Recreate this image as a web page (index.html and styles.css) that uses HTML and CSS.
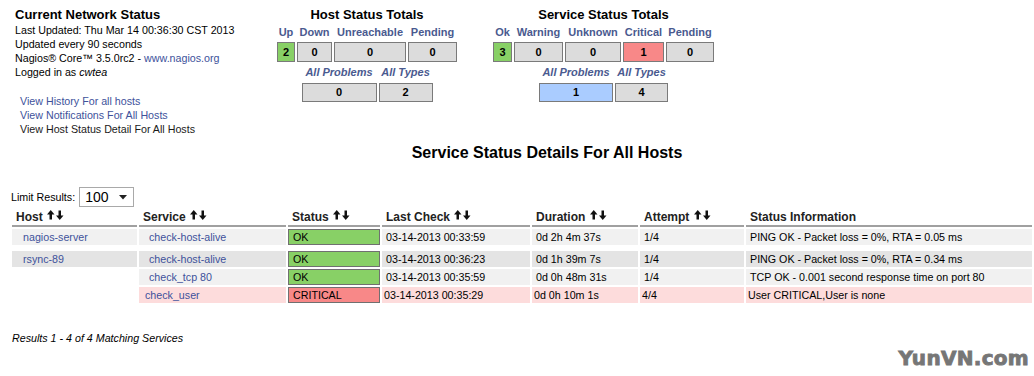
FILE: index.html
```html
<!DOCTYPE html>
<html lang="en">
<head>
    <meta charset="UTF-8">
    <title>Current Network Status</title>
    <link rel="stylesheet" href="styles.css">
</head>
<body>
    <div class="top">
        <div class="info">
            <div class="info-title">Current Network Status</div>
            <div class="info-line">Last Updated: Thu Mar 14 00:36:30 CST 2013</div>
            <div class="info-line">Updated every 90 seconds</div>
            <div class="info-line">Nagios&reg; Core&trade; 3.5.0rc2 - <a href="#">www.nagios.org</a></div>
            <div class="info-line">Logged in as <i>cwtea</i></div>
            <div class="links">
                <a href="#">View History For all hosts</a>
                <a href="#">View Notifications For All Hosts</a>
                <a href="#" class="dark">View Host Status Detail For All Hosts</a>
            </div>
        </div>
        <div class="totals host-totals">
            <div class="totals-title">Host Status Totals</div>
            <div class="totals-grid">
                <span class="lbl">Up</span>
                <span class="lbl">Down</span>
                <span class="lbl">Unreachable</span>
                <span class="lbl">Pending</span>
                <span class="box green">2</span>
                <span class="box">0</span>
                <span class="box">0</span>
                <span class="box">0</span>
            </div>
            <div class="totals-grid sub">
                <span class="lbl">All Problems</span>
                <span class="lbl">All Types</span>
                <span class="box">0</span>
                <span class="box">2</span>
            </div>
        </div>
        <div class="totals service-totals">
            <div class="totals-title">Service Status Totals</div>
            <div class="totals-grid">
                <span class="lbl">Ok</span>
                <span class="lbl">Warning</span>
                <span class="lbl">Unknown</span>
                <span class="lbl">Critical</span>
                <span class="lbl">Pending</span>
                <span class="box green">3</span>
                <span class="box">0</span>
                <span class="box">0</span>
                <span class="box red">1</span>
                <span class="box">0</span>
            </div>
            <div class="totals-grid sub">
                <span class="lbl">All Problems</span>
                <span class="lbl">All Types</span>
                <span class="box blue">1</span>
                <span class="box">4</span>
            </div>
        </div>
    </div>

    <div class="status-title">Service Status Details For All Hosts</div>

    <div class="limit">
        Limit Results:
        <span class="select-wrap">
            <select>
                <option>100</option>
            </select>
            <svg class="select-arrow" width="8" height="5" viewBox="0 0 8 5"><polygon points="0,0 8,0 4,4.5" fill="#222"/></svg>
        </span>
    </div>

    <table class="status">
        <colgroup>
            <col style="width:125px">
            <col style="width:147px">
            <col style="width:92px">
            <col style="width:148px">
            <col style="width:106px">
            <col style="width:104px">
            <col style="width:286px">
        </colgroup>
        <thead>
            <tr>
                <th>Host <svg class="sort" width="17" height="10" viewBox="0 0 17 10"><polygon points="0,4.5 3.75,0 7.5,4.5"/><rect x="2.5" y="4" width="2.5" height="5.5"/><rect x="11.5" y="0.5" width="2.5" height="5.5"/><polygon points="9,5.5 16.5,5.5 12.75,10"/></svg></th>
                <th>Service <svg class="sort" width="17" height="10" viewBox="0 0 17 10"><polygon points="0,4.5 3.75,0 7.5,4.5"/><rect x="2.5" y="4" width="2.5" height="5.5"/><rect x="11.5" y="0.5" width="2.5" height="5.5"/><polygon points="9,5.5 16.5,5.5 12.75,10"/></svg></th>
                <th>Status <svg class="sort" width="17" height="10" viewBox="0 0 17 10"><polygon points="0,4.5 3.75,0 7.5,4.5"/><rect x="2.5" y="4" width="2.5" height="5.5"/><rect x="11.5" y="0.5" width="2.5" height="5.5"/><polygon points="9,5.5 16.5,5.5 12.75,10"/></svg></th>
                <th>Last Check <svg class="sort" width="17" height="10" viewBox="0 0 17 10"><polygon points="0,4.5 3.75,0 7.5,4.5"/><rect x="2.5" y="4" width="2.5" height="5.5"/><rect x="11.5" y="0.5" width="2.5" height="5.5"/><polygon points="9,5.5 16.5,5.5 12.75,10"/></svg></th>
                <th>Duration <svg class="sort" width="17" height="10" viewBox="0 0 17 10"><polygon points="0,4.5 3.75,0 7.5,4.5"/><rect x="2.5" y="4" width="2.5" height="5.5"/><rect x="11.5" y="0.5" width="2.5" height="5.5"/><polygon points="9,5.5 16.5,5.5 12.75,10"/></svg></th>
                <th>Attempt <svg class="sort" width="17" height="10" viewBox="0 0 17 10"><polygon points="0,4.5 3.75,0 7.5,4.5"/><rect x="2.5" y="4" width="2.5" height="5.5"/><rect x="11.5" y="0.5" width="2.5" height="5.5"/><polygon points="9,5.5 16.5,5.5 12.75,10"/></svg></th>
                <th>Status Information</th>
            </tr>
        </thead>
        <tbody>
            <tr class="odd">
                <td class="host"><a href="#">nagios-server</a></td>
                <td class="service"><a href="#">check-host-alive</a></td>
                <td class="state ok">OK</td>
                <td>03-14-2013 00:33:59</td>
                <td>0d 2h 4m 37s</td>
                <td>1/4</td>
                <td>PING OK - Packet loss = 0%, RTA = 0.05 ms</td>
            </tr>
            <tr class="spacer"><td colspan="7"></td></tr>
            <tr class="even">
                <td class="host"><a href="#">rsync-89</a></td>
                <td class="service"><a href="#">check-host-alive</a></td>
                <td class="state ok">OK</td>
                <td>03-14-2013 00:36:23</td>
                <td>0d 1h 39m 7s</td>
                <td>1/4</td>
                <td>PING OK - Packet loss = 0%, RTA = 0.34 ms</td>
            </tr>
            <tr class="odd">
                <td class="blank"></td>
                <td class="service"><a href="#">check_tcp 80</a></td>
                <td class="state ok">OK</td>
                <td>03-14-2013 00:35:59</td>
                <td>0d 0h 48m 31s</td>
                <td>1/4</td>
                <td>TCP OK - 0.001 second response time on port 80</td>
            </tr>
            <tr class="critical">
                <td class="blank"></td>
                <td class="service"><a href="#">check_user</a></td>
                <td class="state crit">CRITICAL</td>
                <td>03-14-2013 00:35:29</td>
                <td>0d 0h 10m 1s</td>
                <td>4/4</td>
                <td>User CRITICAL,User is none</td>
            </tr>
        </tbody>
    </table>

    <div class="results">Results 1 - 4 of 4 Matching Services</div>

    <div class="watermark">YunVN.com</div>
</body>
</html>
```

FILE: styles.css
```css
body{
    margin: 0;
    font-family: "Liberation Sans", Arial, sans-serif;
    font-size: 10.7px;
    color: #000;
    background: #fff;
}
a{
    color: #40529b;
    text-decoration: none;
}
a.dark{
    color: #1a1a1a;
}

/* top area */
.top{
    display: flex;
    padding: 7px 0 0 15px;
    height: 130px;
}
.info{
    width: 262px;
}
.info-title{
    font-size: 13px;
    font-weight: bold;
    line-height: 16px;
}
.info-line{
    line-height: 14px;
}
.links{
    display: flex;
    flex-direction: column;
    margin-top: 15px;
    padding-left: 5px;
    line-height: 14px;
}

.totals{
    display: flex;
    flex-direction: column;
    align-items: center;
}
.host-totals{
    width: 180px;
}
.service-totals{
    width: 221px;
    margin-left: 36px;
}
.totals-title{
    font-size: 13px;
    font-weight: bold;
    line-height: 16px;
    white-space: nowrap;
}
.totals-grid{
    display: grid;
    grid-template-rows: 14px 20px;
    column-gap: 2px;
    row-gap: 3px;
    margin-top: 2px;
}
.host-totals .totals-grid{
    grid-template-columns: 18px 35px 72px 49px;
}
.service-totals .totals-grid{
    grid-template-columns: 19px 49px 56px 41px 48px;
}
.host-totals .totals-grid.sub{
    grid-template-columns: 75px 54px;
}
.service-totals .totals-grid.sub{
    grid-template-columns: 74px 53px;
}
.totals-grid.sub{
    margin-top: 3px;
    grid-template-rows: 14px 19px;
    row-gap: 4px;
}
.totals-grid.sub .lbl{
    font-style: italic;
}
.lbl{
    font-size: 11px;
    font-weight: bold;
    color: #4a5a8f;
    text-align: center;
    white-space: nowrap;
    line-height: 14px;
    justify-self: center;
}
.box{
    border: 1px solid #7a7a7a;
    background-color: #dcdcdc;
    font-size: 11px;
    font-weight: bold;
    text-align: center;
    line-height: 18px;
}
.totals-grid.sub .box{
    line-height: 17px;
}
.box.green{
    background-color: #88d066;
}
.box.red{
    background-color: #f88888;
}
.box.blue{
    background-color: #aaccff;
}

/* details */
.status-title{
    font-size: 16px;
    font-weight: bold;
    line-height: 18px;
    text-align: center;
    padding-left: 60px;
    margin-top: 7px;
}
.limit{
    margin-top: 25px;
    padding-left: 11px;
    display: flex;
    align-items: center;
    gap: 4px;
    height: 20px;
}
.select-wrap{
    position: relative;
    display: inline-block;
}
.select-wrap select{
    appearance: none;
    -webkit-appearance: none;
    width: 55px;
    height: 20px;
    border: 1px solid #a9a9a9;
    border-radius: 0;
    background: #fff;
    font-family: "Liberation Sans", Arial, sans-serif;
    font-size: 14px;
    padding: 0 0 0 5px;
    color: #000;
}
.select-arrow{
    position: absolute;
    right: 7px;
    top: 8px;
}

table.status{
    margin-left: 10px;
    width: 1024px;
    table-layout: fixed;
    border-collapse: separate;
    border-spacing: 2px;
}
.status th{
    text-align: left;
    font-size: 12px;
    font-weight: bold;
    color: #222;
    padding: 0 4px;
    line-height: 16px;
    border-bottom: 2px solid #a0a0a0;
    white-space: nowrap;
}
.sort{
    vertical-align: 1px;
    margin-left: 1px;
}
.sort polygon, .sort rect{
    fill: #111;
}
.status td{
    padding: 0 4px;
    line-height: 16px;
    height: 16px;
    white-space: nowrap;
    overflow: hidden;
}
.status tr.spacer td{
    height: 2px;
    line-height: 2px;
    padding: 0;
}
.status tr.odd td{
    background-color: #f1f1f1;
}
.status tr.even td{
    background-color: #e4e4e4;
}
.status tr.critical td{
    background-color: #fddcdc;
    padding-left: 2px;
}
.status td.blank,
.status tr.odd td.blank,
.status tr.critical td.blank{
    background-color: transparent;
}
.status td.host{
    padding-left: 11px;
}
.status td.service{
    padding-left: 10px;
}
.status tr.critical td.service{
    padding-left: 6px;
}
.status td.state,
.status tr.odd td.state,
.status tr.even td.state,
.status tr.critical td.state{
    border: 1px solid #707070;
    line-height: 14px;
    height: 14px;
    padding-left: 4px;
}
.status tr td.ok{
    background-color: #88d066;
}
.status tr td.crit,
.status tr.critical td.crit{
    background-color: #f88888;
}

.results{
    margin-top: 26px;
    padding-left: 12px;
    font-style: italic;
    line-height: 14px;
}

.watermark{
    position: absolute;
    right: 5px;
    bottom: 6px;
    font-family: "DejaVu Sans", sans-serif;
    font-weight: bold;
    font-size: 20px;
    color: #767676;
    letter-spacing: 0.3px;
    -webkit-text-stroke: 0.9px #767676;
}
```
